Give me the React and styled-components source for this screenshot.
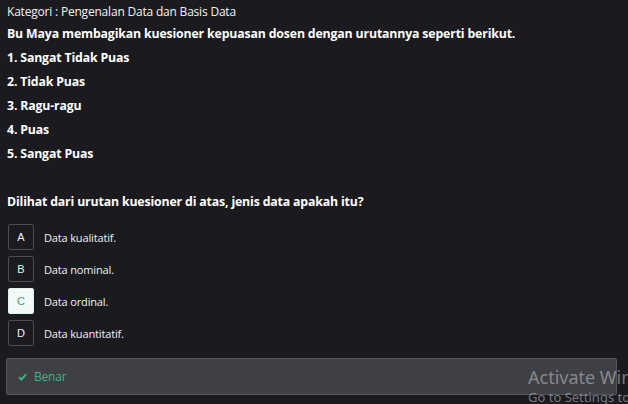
import React from "react";
import styled, { createGlobalStyle } from "styled-components";

const Global = createGlobalStyle`
  html, body { margin: 0; padding: 0; background: #1b1b1f; }
  body { font-family: "Open Sans", "Noto Sans", sans-serif; color: #ffffff; overflow: hidden; }
`;

const Page = styled.div`
  position: relative;
  width: 628px;
  height: 404px;
  overflow: hidden;
  background: #1b1b1f;
  padding: 3px 11px 0 7px;
  box-sizing: border-box;
`;

const Category = styled.div`
  font-size: 12px;
  line-height: 17px;
  color: #f2f2f2;
  letter-spacing: -0.2px;
`;

const Strong = styled.p`
  margin: ${(p) => p.$mt || 0}px 0 0 0;
  font-size: 12.3px;
  font-weight: 700;
  line-height: 18px;
  color: #ffffff;
  letter-spacing: -0.15px;
`;

const List = styled.div`
  display: flex;
  flex-direction: column;
  gap: 6px;
  margin-top: 6px;
`;

const Options = styled.div`
  display: flex;
  flex-direction: column;
  gap: 6px;
  margin-top: 13px;
  padding-left: 1px;
`;

const Option = styled.div`
  display: flex;
  align-items: center;
  gap: 10px;
`;

const Letter = styled.div`
  width: 24px;
  height: 24px;
  border: 1px solid ${(p) => (p.$active ? "#e6f1ec" : "#4b4b52")};
  background: ${(p) => (p.$active ? "#f1fbf6" : "transparent")};
  color: ${(p) => (p.$active ? "#4a9a78" : "#f0f0f0")};
  border-radius: 2px;
  display: flex;
  align-items: center;
  justify-content: center;
  font-size: 11px;
  font-family: "Liberation Sans", Arial, sans-serif;
`;

const OptionText = styled.span`
  font-size: 11px;
  color: #f0f0f0;
  letter-spacing: -0.15px;
`;

const Feedback = styled.div`
  margin-top: 12px;
  margin-left: -1px;
  height: 35px;
  background: #3f3f46;
  border: 1px solid #56565d;
  border-radius: 2px;
  display: flex;
  align-items: center;
  gap: 7px;
  padding-left: 11px;
`;

const FeedbackText = styled.span`
  color: #3db483;
  font-size: 12px;
  letter-spacing: -0.2px;
`;

const Watermark = styled.div`
  position: absolute;
  left: 528px;
  top: 365px;
  color: rgba(200, 200, 205, 0.55);
  font-family: "Noto Sans", "Open Sans", sans-serif;
  white-space: nowrap;
  pointer-events: none;
`;

const WmTitle = styled.div`
  font-size: 18px;
  line-height: 24px;
`;

const WmSub = styled.div`
  font-size: 13px;
  line-height: 16px;
`;

const items = ["1. Sangat Tidak Puas", "2. Tidak Puas", "3. Ragu-ragu", "4. Puas", "5. Sangat Puas"];
const opts = [
  ["A", "Data kualitatif."],
  ["B", "Data nominal."],
  ["C", "Data ordinal."],
  ["D", "Data kuantitatif."],
];

export default function App() {
  return (
    <>
      <Global />
      <Page>
        <Category>Kategori : Pengenalan Data dan Basis Data</Category>
        <Strong $mt={5}>Bu Maya membagikan kuesioner kepuasan dosen dengan urutannya seperti berikut.</Strong>
        <List>
          {items.map((t) => (
            <Strong key={t}>{t}</Strong>
          ))}
        </List>
        <Strong $mt={30}>Dilihat dari urutan kuesioner di atas, jenis data apakah itu?</Strong>
        <Options>
          {opts.map(([l, t]) => (
            <Option key={l}>
              <Letter $active={l === "C"}>{l}</Letter>
              <OptionText>{t}</OptionText>
            </Option>
          ))}
        </Options>
        <Feedback>
          <svg width="9" height="8" viewBox="0 0 9 8">
            <path d="M1 4.2 L3.4 6.5 L8 1.3" fill="none" stroke="#3db483" strokeWidth="2" />
          </svg>
          <FeedbackText>Benar</FeedbackText>
        </Feedback>
        <Watermark>
          <WmTitle>Activate Windows</WmTitle>
          <WmSub>Go to Settings to activate Windows.</WmSub>
        </Watermark>
      </Page>
    </>
  );
}
